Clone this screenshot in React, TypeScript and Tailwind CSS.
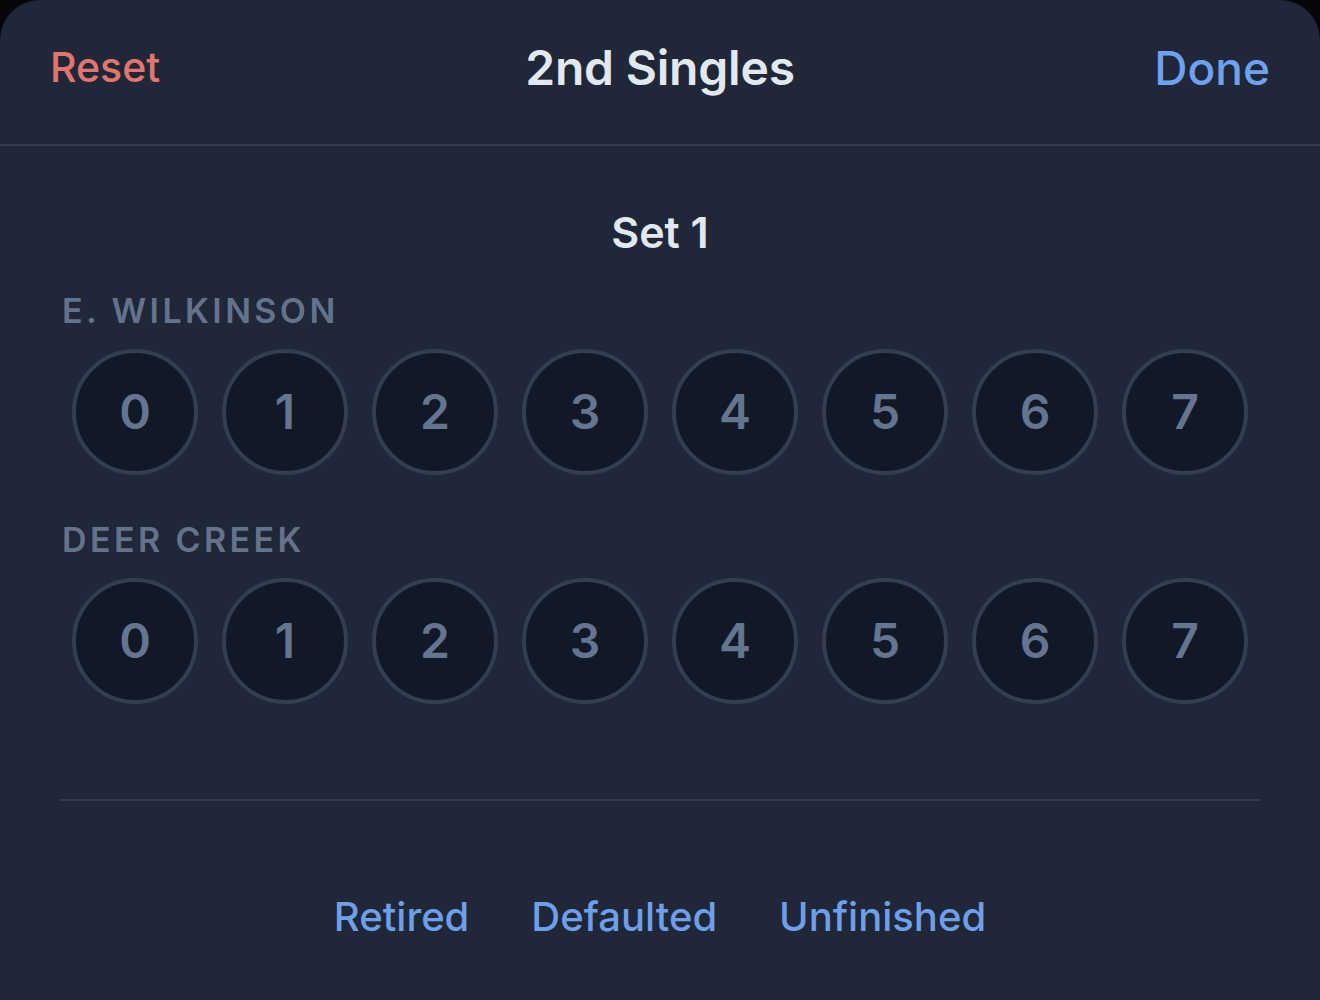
import React from "react";

const scores = [0, 1, 2, 3, 4, 5, 6, 7];

function ScoreRow() {
  return (
    <div className="flex gap-[24px] px-3">
      {scores.map((n) => (
        <button
          key={n}
          className="w-[126px] h-[126px] rounded-full bg-[#111827] border-[4px] border-[#343e50] flex items-center justify-center text-[48px] font-semibold text-[#66758f] leading-none"
        >
          {n}
        </button>
      ))}
    </div>
  );
}

export default function App() {
  return (
    <div className="min-h-screen bg-[#05070c]" style={{ fontFamily: "Inter, 'Noto Sans', sans-serif" }}>
      <div className="h-[1000px] rounded-t-[40px] bg-[#1f2738] flex flex-col">
        {/* header */}
        <div className="h-[146px] border-b-2 border-[#343d4f] grid grid-cols-[1fr_auto_1fr] items-center px-[50px] pb-2">
          <button className="justify-self-start text-[41px] font-medium text-[#e27570]">Reset</button>
          <h1 className="text-[48px] font-semibold text-[#e3e8f0] tracking-[-0.2px]">2nd Singles</h1>
          <button className="justify-self-end text-[46px] font-medium text-[#6ea2f1]">Done</button>
        </div>

        <div className="px-[60px] flex flex-col">
          <div className="mt-[62px] text-center text-[43px] leading-[48px] font-semibold text-[#e3e8f0]">Set 1</div>

          <div className="mt-[35px] pl-[2px] text-[34px] leading-[40px] font-semibold tracking-[3.4px] text-[#64738b]">
            E. WILKINSON
          </div>
          <div className="mt-[18px]">
            <ScoreRow />
          </div>

          <div className="mt-[45px] pl-[2px] text-[34px] leading-[40px] font-semibold tracking-[3.4px] text-[#64738b]">
            DEER CREEK
          </div>
          <div className="mt-[18px]">
            <ScoreRow />
          </div>

          <div className="mt-[95px] h-[2px] bg-[#343d4f]" />

          <div className="mt-[92px] flex justify-center gap-[62px] text-[40px] leading-[48px] font-medium text-[#6f9fe9]">
            <button>Retired</button>
            <button>Defaulted</button>
            <button>Unfinished</button>
          </div>
        </div>
      </div>
    </div>
  );
}
